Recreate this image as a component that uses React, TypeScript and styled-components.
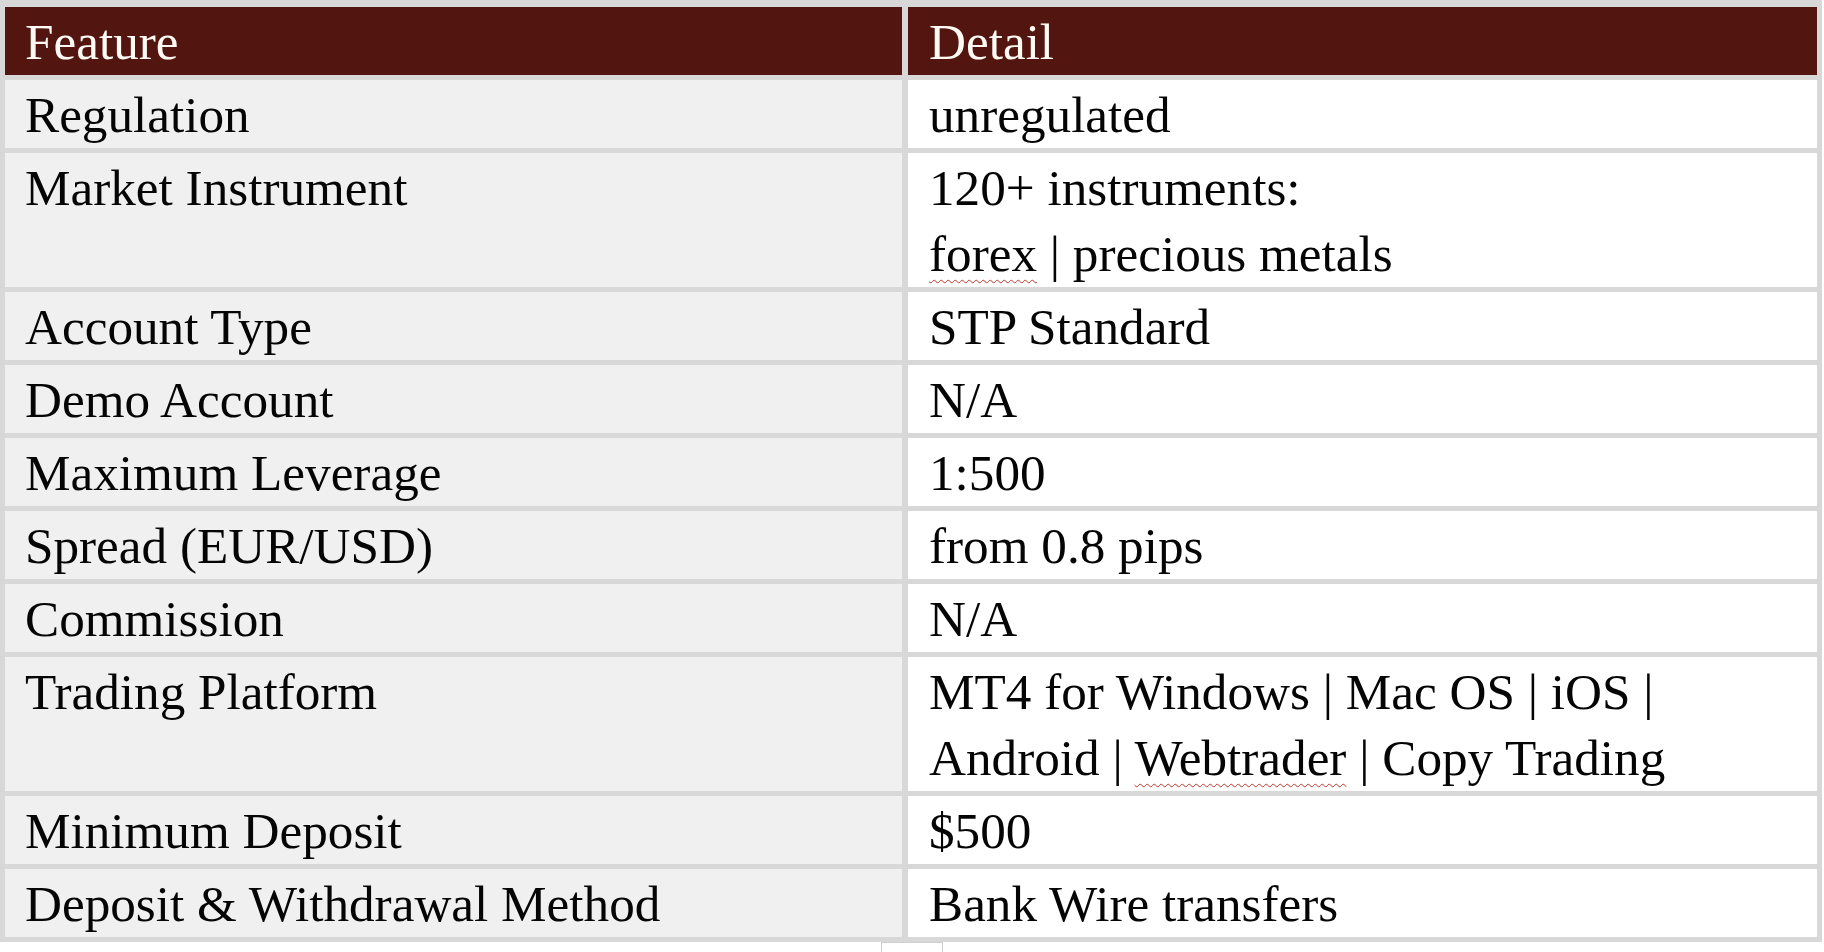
import styled, { createGlobalStyle } from "styled-components";

const GlobalStyle = createGlobalStyle`
  html, body {
    margin: 0;
    padding: 0;
    background: #ffffff;
  }
  body {
    font-family: "Liberation Serif", "Times New Roman", serif;
  }
`;

const Page = styled.div`
  width: 1824px;
  height: 952px;
  overflow: hidden;
  background: #ffffff;
`;

const Table = styled.div`
  display: grid;
  grid-template-columns: 897px 909px;
  column-gap: 6px;
  row-gap: 5px;
  width: fit-content;
  padding: 7px 5px 5px 5px;
  background: #d8d8d8;
`;

const HeadCell = styled.div<{ $right?: boolean }>`
  background: #521510;
  color: #fffaf4;
  font-size: 51.2px;
  line-height: 66px;
  padding-top: 2px;
  padding-left: ${(p) => (p.$right ? "21px" : "20px")};
`;

const Cell = styled.div<{ $right?: boolean }>`
  background: ${(p) => (p.$right ? "#ffffff" : "#f0f0f0")};
  color: #050505;
  font-size: 51.2px;
  line-height: 66px;
  padding-top: 2px;
  padding-left: ${(p) => (p.$right ? "21px" : "20px")};
  white-space: nowrap;
`;

const Typo = styled.span`
  text-decoration: underline wavy #c0392b;
  text-decoration-thickness: 1px;
  text-underline-offset: 8px;
  text-decoration-skip-ink: none;
`;

const ScrollTab = styled.div`
  margin-left: 881px;
  width: 60px;
  height: 12px;
  border: 1px solid #cfcfcf;
  border-bottom: none;
`;

type Row = { feature: string; detail: React.ReactNode };

const rows: Row[] = [
  { feature: "Regulation", detail: "unregulated" },
  {
    feature: "Market Instrument",
    detail: (
      <>
        120+ instruments:
        <br />
        <Typo>forex</Typo> | precious metals
      </>
    ),
  },
  { feature: "Account Type", detail: "STP Standard" },
  { feature: "Demo Account", detail: "N/A" },
  { feature: "Maximum Leverage", detail: "1:500" },
  { feature: "Spread (EUR/USD)", detail: "from 0.8 pips" },
  { feature: "Commission", detail: "N/A" },
  {
    feature: "Trading Platform",
    detail: (
      <>
        MT4 for Windows | Mac OS | iOS |
        <br />
        Android | <Typo>Webtrader</Typo> | Copy Trading
      </>
    ),
  },
  { feature: "Minimum Deposit", detail: "$500" },
  { feature: "Deposit & Withdrawal Method", detail: "Bank Wire transfers" },
];

const App = () => {
  return (
    <Page>
      <GlobalStyle />
      <Table>
        <HeadCell>Feature</HeadCell>
        <HeadCell $right>Detail</HeadCell>
        {rows.map((r) => (
          <>
            <Cell key={r.feature}>{r.feature}</Cell>
            <Cell key={r.feature + "-d"} $right>
              {r.detail}
            </Cell>
          </>
        ))}
      </Table>
      <ScrollTab />
    </Page>
  );
};

export default App;
